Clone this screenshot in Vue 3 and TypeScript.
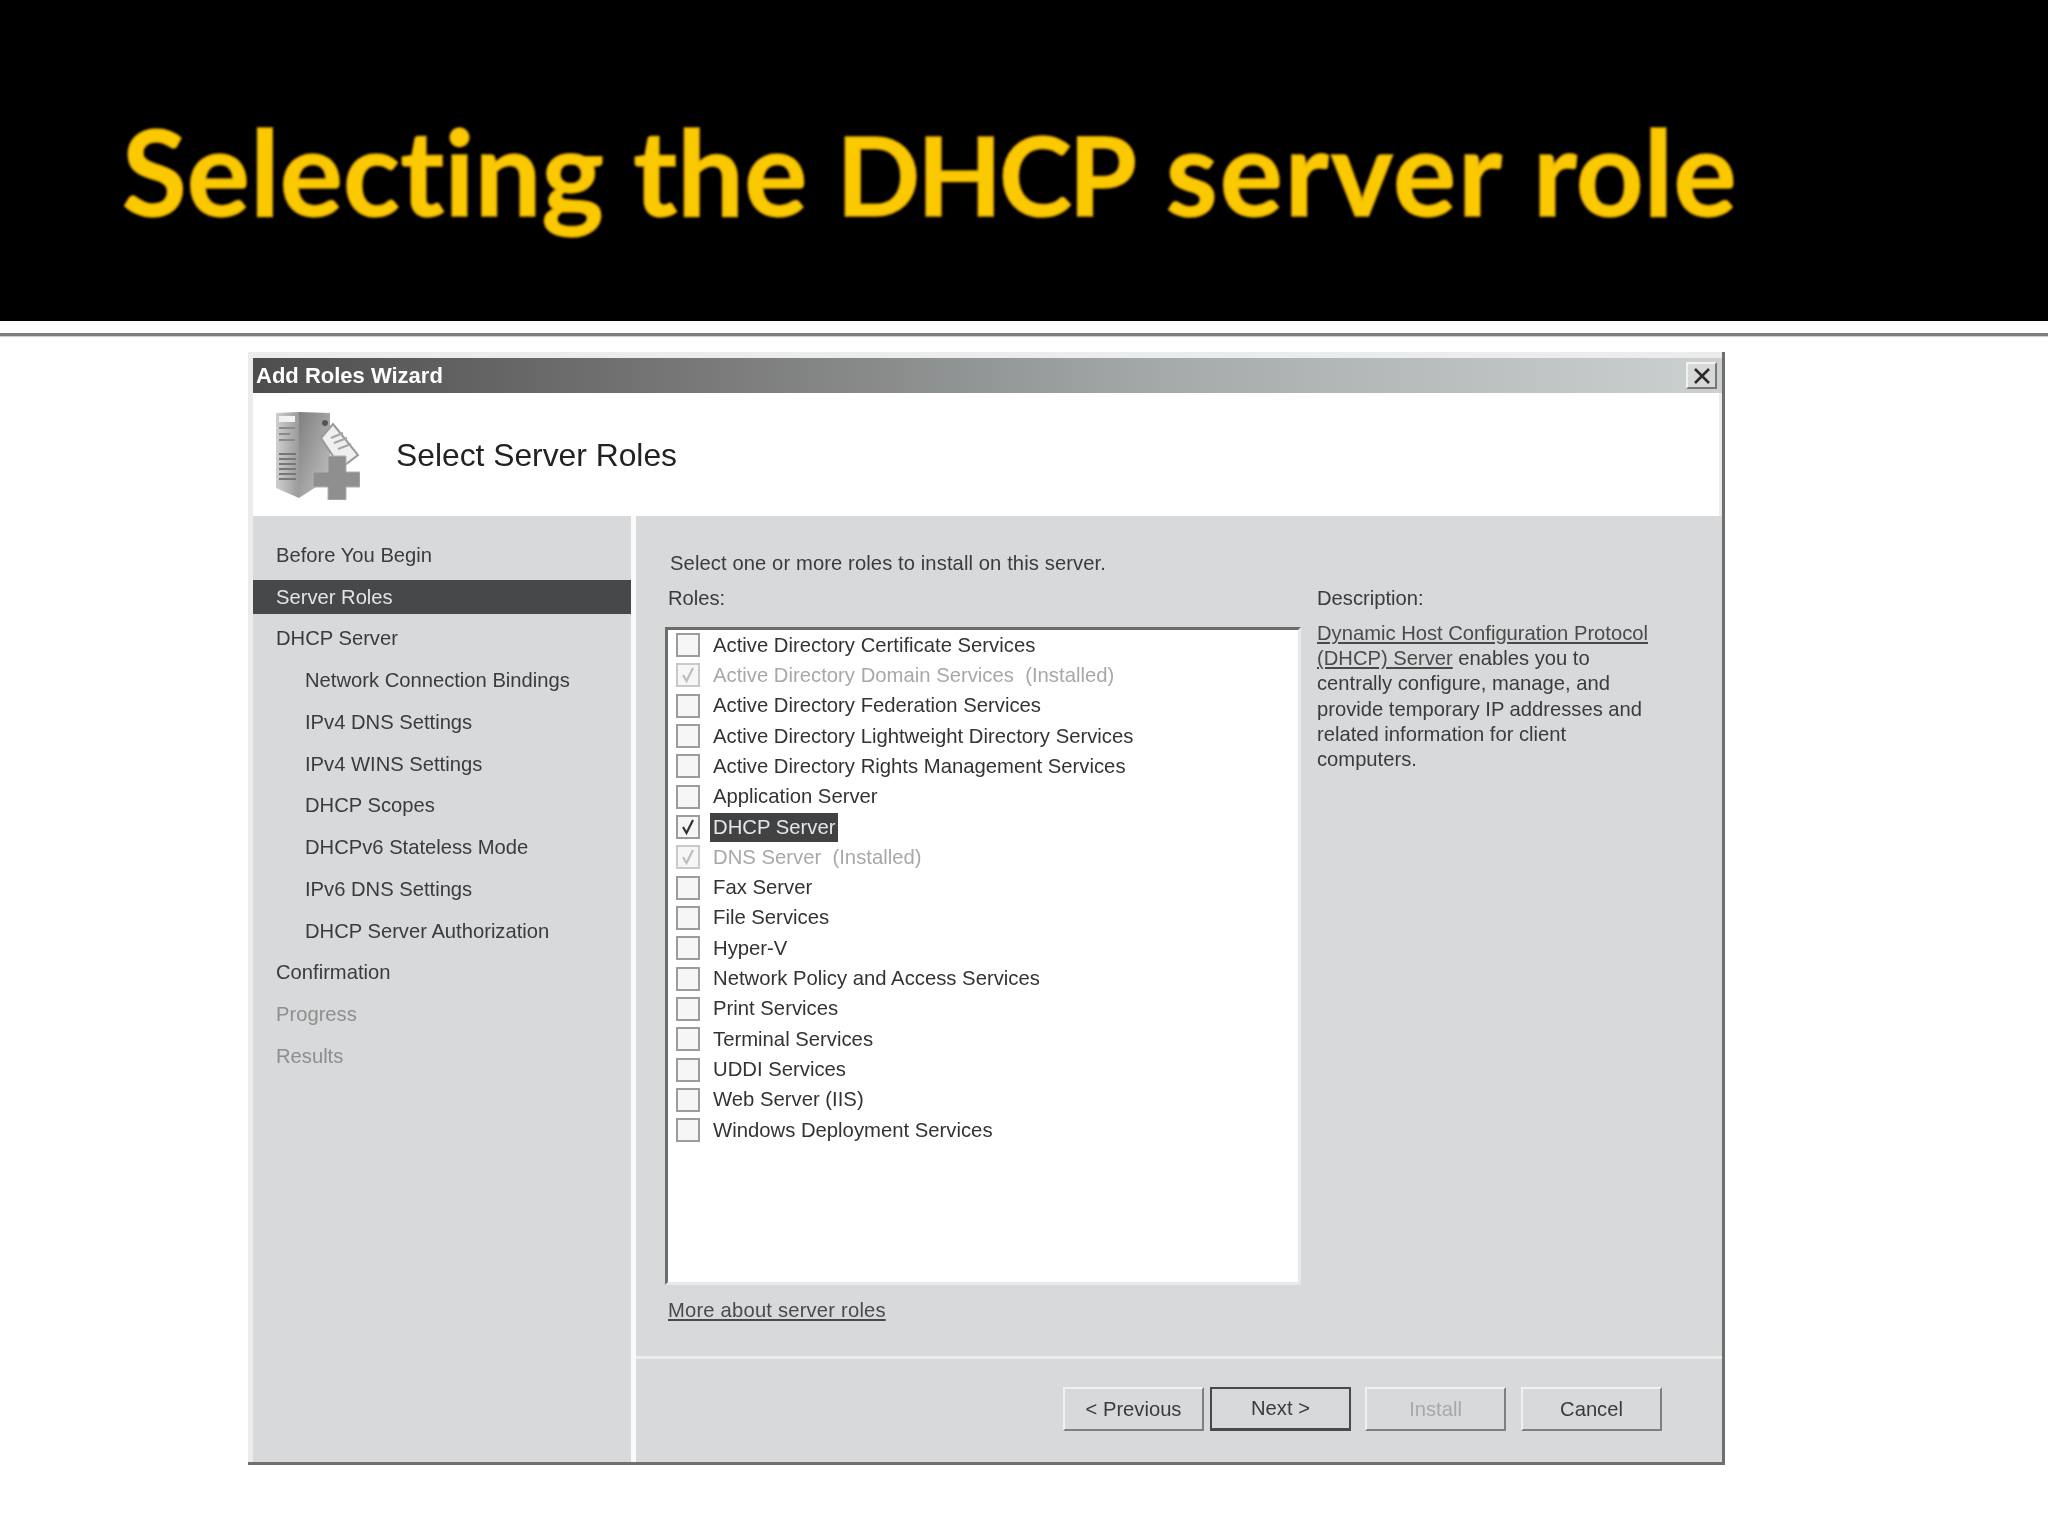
<script setup lang="ts">
interface NavItem { label: string; sub?: boolean; active?: boolean; off?: boolean }
interface Role { label: string; state?: 'installed' | 'checked' }

const nav: NavItem[] = [
  { label: 'Before You Begin' },
  { label: 'Server Roles', active: true },
  { label: 'DHCP Server' },
  { label: 'Network Connection Bindings', sub: true },
  { label: 'IPv4 DNS Settings', sub: true },
  { label: 'IPv4 WINS Settings', sub: true },
  { label: 'DHCP Scopes', sub: true },
  { label: 'DHCPv6 Stateless Mode', sub: true },
  { label: 'IPv6 DNS Settings', sub: true },
  { label: 'DHCP Server Authorization', sub: true },
  { label: 'Confirmation' },
  { label: 'Progress', off: true },
  { label: 'Results', off: true },
]

const roles: Role[] = [
  { label: 'Active Directory Certificate Services' },
  { label: 'Active Directory Domain Services  (Installed)', state: 'installed' },
  { label: 'Active Directory Federation Services' },
  { label: 'Active Directory Lightweight Directory Services' },
  { label: 'Active Directory Rights Management Services' },
  { label: 'Application Server' },
  { label: 'DHCP Server', state: 'checked' },
  { label: 'DNS Server  (Installed)', state: 'installed' },
  { label: 'Fax Server' },
  { label: 'File Services' },
  { label: 'Hyper-V' },
  { label: 'Network Policy and Access Services' },
  { label: 'Print Services' },
  { label: 'Terminal Services' },
  { label: 'UDDI Services' },
  { label: 'Web Server (IIS)' },
  { label: 'Windows Deployment Services' },
]
</script>

<template>
  <div class="page">
    <header class="band"><h1>Selecting the <span class="caps">DHCP</span> <span class="wide">server</span> role</h1></header>
    <div class="rule"></div>

    <section class="dialog">
      <div class="titlebar">
        <span>Add Roles Wizard</span>
        <button class="close" aria-label="Close">
          <svg width="18" height="16" viewBox="0 0 18 16"><path d="M2 1 16 15M16 1 2 15" stroke="#2b2b2b" stroke-width="2.6" fill="none"/></svg>
        </button>
      </div>

      <div class="head">
        <svg class="server" width="85" height="90" viewBox="0 0 85 90">
          <defs>
            <linearGradient id="front" x1="0" x2="1" y1="0" y2="0">
              <stop offset="0" stop-color="#cfcfcf"/><stop offset="1" stop-color="#9a9a9a"/>
            </linearGradient>
            <linearGradient id="side" x1="0" x2="1" y1="0" y2="1">
              <stop offset="0" stop-color="#7f7f7f"/><stop offset="1" stop-color="#c4c4c4"/>
            </linearGradient>
          </defs>
          <path d="M1 3 24 2V88L1 78Z" fill="url(#front)"/>
          <path d="M24 2 55 3V68L24 88Z" fill="url(#side)"/>
          <path d="M4 6H20V12H4Z" fill="#f2f2f2"/>
          <path d="M4 18H20M4 24H15M4 30H20" stroke="#8a8a8a" stroke-width="2"/>
          <path d="M4 44H21M4 49H21M4 54H21M4 59H21M4 64H21M4 69H21" stroke="#777" stroke-width="2"/>
          <circle cx="50" cy="13" r="3" fill="#555"/>
          <path d="M58 14 83 45 66 58 46 28Z" fill="#efefef" stroke="#9a9a9a" stroke-width="2"/>
          <path d="M56 28 68 23M59 33 72 28M63 39 76 34" stroke="#a5a5a5" stroke-width="2"/>
          <path d="M53 46H71V62H85V77H71V90H53V77H38V62H53Z" fill="#8f8f8f" stroke="#b0b0b0"/>
        </svg>
        <h2>Select Server Roles</h2>
      </div>

      <div class="body">
        <nav class="steps">
          <div
            v-for="item in nav"
            :key="item.label"
            class="step"
            :class="{ sub: item.sub, active: item.active, off: item.off }"
          >{{ item.label }}</div>
        </nav>

        <div class="main">
          <div class="upper">
            <p class="intro">Select one or more roles to install on this server.</p>
            <div class="columns">
              <div class="rolecol">
                <div class="label">Roles:</div>
                <ul class="list">
                  <li v-for="role in roles" :key="role.label" class="role" :class="role.state">
                    <span class="box">
                      <svg v-if="role.state" width="18" height="18" viewBox="0 0 18 18"><path d="M4 9 7.5 15 14 2" fill="none" stroke="currentColor" stroke-width="2.2"/></svg>
                    </span>
                    <span class="name">{{ role.label }}</span>
                  </li>
                </ul>
                <a class="link more">More about server roles</a>
              </div>
              <div class="desc">
                <div class="label">Description:</div>
                <p>
                  <a class="link">Dynamic Host Configuration Protocol<br>(DHCP) Server</a> enables you to<br>
                  centrally configure, manage, and<br>
                  provide temporary IP addresses and<br>
                  related information for client<br>
                  computers.
                </p>
              </div>
            </div>
          </div>
          <footer class="actions">
            <button class="btn">&lt; Previous</button>
            <button class="btn primary">Next &gt;</button>
            <button class="btn disabled">Install</button>
            <button class="btn">Cancel</button>
          </footer>
        </div>
      </div>
    </section>
  </div>
</template>

<style>
html, body { margin: 0; background: #fff; }
</style>

<style scoped>
.page {
  width: 2048px;
  height: 1536px;
  overflow: hidden;
  background: #fff;
  font-family: "Liberation Sans", Arial, sans-serif;
  font-size: 20.2px;
  color: #3b3b3b;
}
.band {
  height: 321px;
  background: #000;
  display: flex;
  align-items: center;
  padding-left: 122px;
}
.band h1 {
  margin: 20px 0 0;
  font-family: Lato, sans-serif;
  font-weight: 700;
  font-size: 118px;
  line-height: 1;
  letter-spacing: 0.3px;
  color: #fbc900;
  -webkit-text-stroke: 1.5px #e8ad00;
  white-space: nowrap;
  filter: blur(0.8px);
}
.caps { font-size: 110px; letter-spacing: -3px; margin-right: 3px; }
.wide { letter-spacing: 2px; }
.rule {
  height: 3px;
  margin-top: 12px;
  background: #7d7d7d;
  box-shadow: 0 1px 1px #ccc;
}
.dialog {
  width: 1477px;
  height: 1113px;
  box-sizing: border-box;
  margin: 16px 0 0 248px;
  display: flex;
  flex-direction: column;
  padding: 6px 0 0 5px;
  background: #ececec;
  border-right: 3px solid #6f6f6f;
  border-bottom: 3px solid #6f6f6f;
  filter: blur(0.7px);
}
.titlebar {
  height: 35px;
  flex: none;
  display: flex;
  align-items: center;
  justify-content: space-between;
  padding: 0 5px 0 3px;
  background: linear-gradient(90deg, #4d4d4d 0%, #7b7b7b 32%, #a8aeae 65%, #cdd0d0 100%);
  color: #fff;
  font-weight: 700;
  font-size: 22px;
}
.close {
  width: 31px;
  height: 27px;
  padding: 0;
  display: flex;
  align-items: center;
  justify-content: center;
  background: #d8d8d8;
  border: 2px solid;
  border-color: #f2f2f2 #777 #777 #f2f2f2;
}
.head {
  height: 123px;
  flex: none;
  display: flex;
  align-items: center;
  gap: 36px;
  padding-left: 22px;
  margin-right: 3px;
  background: #fff;
}
.head h2 {
  margin: 2px 0 0;
  font-size: 31.8px;
  font-weight: 400;
  color: #222;
}
.body {
  flex: 1;
  display: flex;
  min-height: 0;
  background: #d7d9da;
}
.steps {
  width: 378px;
  flex: none;
  padding-top: 18px;
  border-right: 5px solid #fafafa;
}
.step {
  height: 41.75px;
  box-sizing: border-box;
  display: flex;
  align-items: center;
  padding: 1px 0 0 23px;
  white-space: nowrap;
}
.step.sub { padding-left: 52px; }
.step.active { background: #47484a; color: #e4e4e4; height: 34px; margin: 4px 0 3.75px; }
.step.off { color: #8e8e8e; }
.main {
  flex: 1;
  display: flex;
  flex-direction: column;
  min-width: 0;
}
.upper {
  height: 843px;
  flex: none;
  box-sizing: border-box;
  padding: 34px 0 0 29px;
  border-bottom: 3px solid #eceded;
}
.intro {
  margin: 0 0 9px 5px;
  line-height: 26px;
  letter-spacing: 0.1px;
}
.columns { display: flex; }
.rolecol { width: 636px; flex: none; }
.label { line-height: 26px; padding-left: 3px; }
.list {
  list-style: none;
  margin: 16px 0 0;
  padding: 0 0 0 8px;
  height: 658px;
  box-sizing: border-box;
  background: #fff;
  border: 3px solid;
  border-color: #6c6c6c #e9e9e9 #e9e9e9 #6c6c6c;
  color: #333;
  font-size: 20.3px;
}
.role {
  height: 30.32px;
  display: flex;
  align-items: center;
  white-space: pre;
}
.box {
  width: 24px;
  height: 24px;
  flex: none;
  box-sizing: border-box;
  display: flex;
  align-items: center;
  justify-content: center;
  background: #f6f6f6;
  border: 2px solid #9c9c9c;
  color: #333;
}
.name { margin-left: 13px; }
.role.installed { color: #a8a8a8; }
.role.installed .box { border-color: #c9c9c9; color: #bdbdbd; }
.role.checked .name {
  margin-left: 10px;
  padding: 0 3px;
  line-height: 29px;
  background: #414244;
  color: #e6e6e6;
}
.link { color: #4a4a4a; text-decoration: underline; }
.more { display: block; margin: 12px 0 0 3px; line-height: 26px; letter-spacing: 0.2px; }
.desc { margin-left: 13px; width: 380px; }
.desc p { margin: 10px 0 0 3px; line-height: 25.2px; white-space: nowrap; }
.actions {
  flex: 1;
  display: flex;
  justify-content: flex-end;
  align-items: flex-start;
  gap: 6px;
  padding: 28px 60px 0 0;
}
.btn {
  width: 141px;
  height: 44px;
  padding: 0;
  font: inherit;
  color: #3b3b3b;
  background: #d8d9db;
  border: 2px solid;
  border-color: #f1f1f1 #7f7f7f #7f7f7f #f1f1f1;
}
.btn.primary { border-color: #4a4a4a; border-width: 2px 2px 3px; margin-right: 8px; }
.btn.disabled { color: #a8a8a8; margin-right: 9px; }
</style>
